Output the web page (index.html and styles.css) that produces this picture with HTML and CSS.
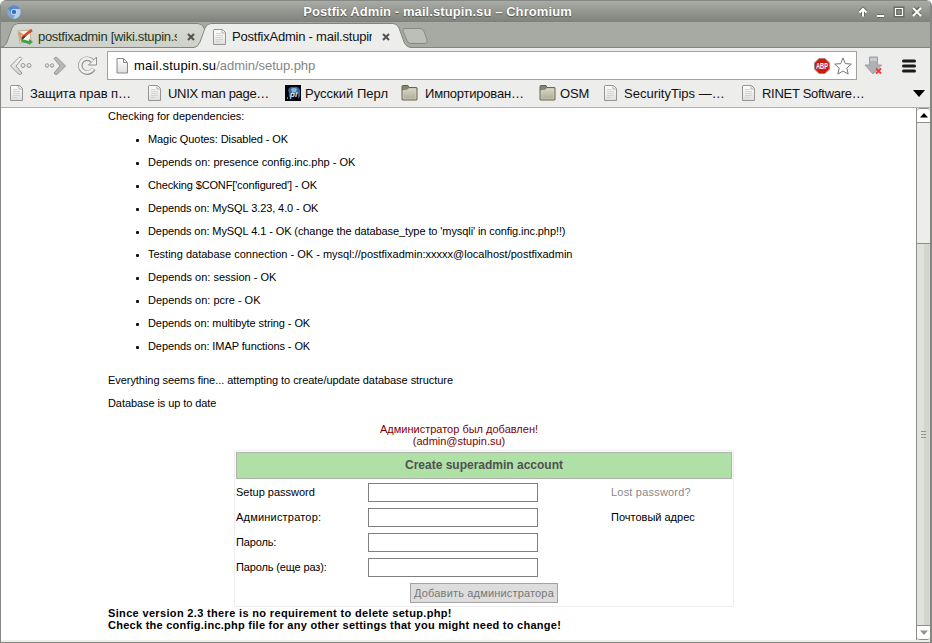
FILE: index.html
```html
<!DOCTYPE html>
<html lang="ru">
<head>
<meta charset="utf-8">
<title>Postfix Admin - mail.stupin.su – Chromium</title>
<link rel="stylesheet" href="styles.css">
</head>
<body>
<svg class="defs" width="0" height="0">
  <defs>
    <linearGradient id="paper" x2="0" y2="1"><stop stop-color="#fff"/><stop offset="1" stop-color="#dedede"/></linearGradient>
    <linearGradient id="fold" x2="0" y2="1"><stop stop-color="#d6d6c4"/><stop offset="1" stop-color="#aeae98"/></linearGradient>
    <linearGradient id="silver" x2="0" y2="1"><stop stop-color="#fff"/><stop offset="1" stop-color="#ccc"/></linearGradient>
    <linearGradient id="tabfill" x2="0" y2="1"><stop stop-color="#d7dad4"/><stop offset="1" stop-color="#cdd1c9"/></linearGradient>
    <symbol id="doc" viewBox="0 0 16 16"><path d="M2 .5h8.500l3 3v12H1.500V1z" fill="url(#paper)" stroke="#959595"/><path d="M10 1v3h3" fill="#fff" stroke="#aaa"/><path d="M4 4.500h5M4 6.500h7M4 8.500h7M4 10.500h7M4 12.500h4" stroke="#d4d4d4"/></symbol>
    <symbol id="folder" viewBox="0 0 16 16"><path d="M.5 14.500V1.500q0-1 1-1h5l1 2h7.500q.5 0 .5.500v11.500q0 .5-1 .5H1.500q-1 0-1-.5z" fill="#85856f" stroke="#65654f"/><path d="M1.500 5.500l4-.3 2-1.700h7v10.500h-13z" fill="url(#fold)" stroke="#d8d8c6" stroke-width=".7"/></symbol>
  </defs>
</svg>
<div class="window">
  <header class="titlebar">
    <svg class="app" width="14" height="14" viewBox="0 0 14 14"><circle cx="7" cy="7" r="6.800" fill="#7fa6d6"/><path d="M1 4A7 7 0 0 1 13 4H7L4 7z" fill="#558acb"/><path d="M13 4A7 7 0 0 1 6 13.800L9.500 8 7 4z" fill="#b2d1f1"/><circle cx="7" cy="7" r="3" fill="#e0edfa"/><circle cx="7" cy="7" r="2.300" fill="#3972b8"/></svg>
    <h1>Postfix Admin - mail.stupin.su – Chromium</h1>
    <svg class="controls" width="66" height="12" viewBox="0 0 66 12"><g fill="none" stroke="#686b65" stroke-width="4"><path d="M5 10V3M2 6l3-3 3 3M19 10h7M37.500 2.500h7v7h-7zM55 2l7 7M62 2l-7 7"/></g><g fill="none" stroke="#fff" stroke-width="2"><path d="M5 10.500V3M1.500 6.500L5 3l3.500 3.500M19 10h7"/><path d="M37.500 2.500h7v7h-7z" stroke-width="1.200"/><path d="M55 2l8 8M63 2l-8 8"/></g></svg>
  </header>

  <nav class="tabs">
    <svg class="tabshapes" width="460" height="26" viewBox="0 0 460 26"><path d="M-1 25.500Q4 25 6 20L11 6Q13 1.500 17 1.500H197Q201 1.500 203 6L210 25.500z" fill="url(#tabfill)" stroke="#81857c"/><path d="M404 6.500h15q3 0 4 3l3 8q1 4-2 4h-14q-3 0-4-3l-4-9q-1-3 2-3" fill="#bbbfb7" stroke="#858980"/><path d="M-1 25.500H193Q197 25 199 20L204 6Q206 1.500 210 1.500H392Q396 1.500 398 6L403 20Q405 25 410 25.500H460V27H-1z" fill="#ededeb" stroke="#81857c"/></svg>
    <div class="tab first">
      <svg width="17" height="16" viewBox="0 0 17 16"><path d="M1 2l12-1 1 12-11 1z" fill="#f6f1e7" stroke="#b8b29c"/><path d="M2 3l3 10M5 11l7 3M3 4l4 3" stroke="#d19b74" stroke-width="2"/><path d="M5 9l7-6 3-2" stroke="#d5492a" stroke-width="2.800"/><path d="M5 10l3-3" stroke="#333" stroke-width="1.500"/><path d="M4 10l8 2v-2l4 3-4 3v-1l-7-2z" fill="#36a845"/></svg>
      <span class="label l1">postfixadmin [wiki.stupin.su]</span>
      <svg class="close" width="8" height="8" viewBox="0 0 8 8"><path d="M1 1l6 6M7 1L1 7" stroke="#50544d" stroke-width="2"/></svg>
    </div>
    <div class="tab second">
      <svg width="16" height="16"><use href="#doc"/></svg>
      <span class="label l2">PostfixAdmin - mail.stupin.su</span>
      <svg class="close" width="8" height="8" viewBox="0 0 8 8"><path d="M1 1l6 6M7 1L1 7" stroke="#50544d" stroke-width="2"/></svg>
    </div>
  </nav>

  <div class="toolbar">
    <svg class="nav" width="91" height="22" viewBox="0 0 91 22"><g fill="url(#silver)" stroke="#969696"><path d="M1.500 11L10 2.500q2-1 3 1L7 11l6 7q-1 2-3 1.500z"/><circle cx="14" cy="10.500" r="2"/><circle cx="20" cy="10.500" r="2"/><circle cx="38" cy="10.500" r="1.700"/><circle cx="43" cy="10.500" r="1.700"/><path d="M56.500 11L48 2.500q-2-1-3 1l6 7.500-6 7q1 2 3 1.500z" fill="#b8b8b8"/></g><path d="M83.500 6A7 7 0 1 0 84.500 14" fill="none" stroke="#929292" stroke-width="4.600"/><path d="M87.500 2v8h-8z" fill="#f2f2f2" stroke="#929292"/><path d="M83.500 6A7 7 0 1 0 84 14" fill="none" stroke="#f0f0f0" stroke-width="2.800"/></svg>
    <div class="url">
      <svg width="13" height="16" viewBox="0 0 13 16"><path d="M1 .5h6.500l4 4v10.500H1z" fill="url(#paper)" stroke="#888"/><path d="M7.500 1v3.500H11" fill="none" stroke="#888"/></svg>
      <span class="address">mail.stupin.su<span>/admin/setup.php</span></span>
      <svg class="abp" width="16" height="16" viewBox="0 0 16 16"><path d="M5 .5h6L15.500 5v6L11 15.500H5L.5 11V5z" fill="#d01b0b" stroke="#aa8078"/><text x="8" y="11" text-anchor="middle" textLength="12" lengthAdjust="spacingAndGlyphs">ABP</text></svg>
      <svg class="star" width="18" height="18" viewBox="0 0 18 18"><path d="M9 .9l2.300 5.700 6 .5-4.500 4 1.400 6L9 14l-5.200 3.100 1.400-6-4.500-4 6-.5z" fill="#fff" stroke="#777"/></svg>
    </div>
    <svg class="download" width="20" height="20" viewBox="0 0 20 20"><path d="M5.500 1h8v8h4l-8.500 9L1 9h4.500z" fill="#aeb2b6" stroke="#9ba0a4"/><path d="M6 2h7v3H6z" fill="#c9cccf"/><path d="M12 12.500l5 5M17 12.500l-5 5" stroke="#ef3539" stroke-width="1.800"/></svg>
    <svg class="menu" width="14" height="14" viewBox="0 0 14 14"><path d="M1.500 2h11M1.500 7h11M1.500 12h11" stroke="#1b1b1b" stroke-width="3" stroke-linecap="round"/></svg>
  </div>

  <div class="bookmarks">
    <div class="bm b1"><svg width="16" height="16"><use href="#doc"/></svg><span>Защита прав п…</span></div>
    <div class="bm b2"><svg width="16" height="16"><use href="#doc"/></svg><span>UNIX man page…</span></div>
    <div class="bm b3"><svg width="16" height="16" viewBox="0 0 16 16"><path d="M0 0h16v16H0z" fill="#02050f"/><path d="M3 5q2-4 6-3 4-1 6 3v6l-2 3V9H6v3H4V8z" fill="#3a6398"/><path d="M6 4q3-2 6 0l-1 3-4 1z" fill="#89b3dc"/><text class="pl" x="5" y="12">pl</text><path d="M2 13h1" stroke="#fff"/></svg><span>Русский Перл</span></div>
    <div class="bm b4"><svg width="17" height="16"><use href="#folder"/></svg><span>Импортирован…</span></div>
    <div class="bm b5"><svg width="17" height="16"><use href="#folder"/></svg><span>OSM</span></div>
    <div class="bm b6"><svg width="16" height="16"><use href="#doc"/></svg><span>SecurityTips —…</span></div>
    <div class="bm b7"><svg width="16" height="16"><use href="#doc"/></svg><span>RINET Software…</span></div>
    <svg class="more" width="12" height="7" viewBox="0 0 12 7"><path d="M0 0h12L6 7z"/></svg>
  </div>

  <div class="viewport">
    <main>
      <p>Checking for dependencies:</p>
      <ul>
        <li class="tight">Magic Quotes: Disabled - OK</li>
        <li>Depends on: presence config.inc.php - OK</li>
        <li class="tighter">Checking $CONF['configured'] - OK</li>
        <li class="tight">Depends on: MySQL 3.23, 4.0 - OK</li>
        <li class="tight">Depends on: MySQL 4.1 - OK (change the database_type to 'mysqli' in config.inc.php!!)</li>
        <li>Testing database connection - OK - mysql://postfixadmin:xxxxx@localhost/postfixadmin</li>
        <li>Depends on: session - OK</li>
        <li>Depends on: pcre - OK</li>
        <li class="tight">Depends on: multibyte string - OK</li>
        <li class="tight">Depends on: IMAP functions - OK</li>
      </ul>
      <p class="fine">Everything seems fine... attempting to create/update database structure</p>
      <p class="upto">Database is up to date</p>
      <p class="message">Администратор был добавлен!<br>(admin@stupin.su)</p>
      <form>
        <h3>Create superadmin account</h3>
        <div class="row"><label>Setup password</label><input type="text"><a>Lost password?</a></div>
        <div class="row"><label class="wide">Администратор:</label><input type="text"><span>Почтовый адрес</span></div>
        <div class="row"><label class="tighter">Пароль:</label><input type="text"></div>
        <div class="row"><label class="tighter">Пароль (еще раз):</label><input type="text"></div>
        <button type="button">Добавить администратора</button>
      </form>
      <p class="notice"><span class="since">Since version 2.3 there is no requirement to delete setup.php!</span><br>Check the config.inc.php file for any other settings that you might need to change!</p>
    </main>
    <aside class="scrollbar">
      <div class="arrow"><svg width="8" height="5" viewBox="0 0 8 5"><path d="M0 4.500L4 0l4 4.500z"/></svg></div>
      <div class="thumb"></div>
      <div class="track"><i></i><i></i><i></i></div>
      <div class="arrow down"><svg width="8" height="5" viewBox="0 0 8 5"><path d="M0 .5L4 5 8 .5z" fill="#92958f"/></svg></div>
    </aside>
  </div>
</div>
</body>
</html>
```

FILE: styles.css
```css
* { box-sizing: border-box; }
body { margin: 0; background: #fff; color: #000; font-family: "Liberation Sans", sans-serif; overflow: hidden; }
p, h1, h3, ul { margin: 0; padding: 0; }
svg { display: block; flex: none; }
.defs { position: absolute; }
.window { width: 932px; height: 643px; display: flex; flex-direction: column; border: 1px solid #858882; border-width: 0 2px 1px 1px; border-radius: 6px 6px 0 0; overflow: hidden; background: #ededeb; }
.titlebar { height: 22px; flex: none; display: flex; align-items: center; padding: 2px 6px 0 6px; background: linear-gradient(#858882 0, #858882 1px, #a9aca6 1px, #7e827b 100%); }
h1 { flex: 1; text-align: center; font-size: 13px; line-height: 18px; letter-spacing: .08px; color: #fff; text-shadow: 0 0 1px #555, 0 1px 1px #555; padding-right: 4px; }
.tabs { height: 26px; flex: none; background: #a7aaa3; position: relative; display: flex; }
.tabshapes { position: absolute; left: 0; top: 0; }
.tabs::after { content: ""; position: absolute; left: 430px; right: 0; bottom: 0; height: 1px; background: #81857c; }
.tab { position: relative; display: flex; align-items: center; height: 26px; padding-top: 3px; font-size: 13px; color: #111; }
.first { width: 194px; padding-left: 16px; color: #24351d; }
.second { width: 204px; padding-left: 17px; }
.label { overflow: hidden; white-space: nowrap; width: 140px; line-height: 18px; }
.l1 { margin-left: 4px; letter-spacing: -.3px; }
.l2 { margin-left: 4px; letter-spacing: -.22px; }
.close { margin-left: 10px; }
.toolbar { height: 33px; flex: none; display: flex; align-items: center; padding: 2px 13px 0 8px; }
.nav { margin-right: 7px; }
.url { width: 750px; height: 29px; border: 1px solid #a1a49c; background: #fff; display: flex; align-items: center; padding-left: 8px; }
.address { margin-left: 5px; font-size: 13px; letter-spacing: .2px; flex: 1; }
.address span { color: #858585; letter-spacing: -.05px; }
.abp { margin-right: 4px; }
.abp text { font: bold 9px "Liberation Sans", sans-serif; fill: #fff; }
.star { margin-right: 4px; }
.download { margin-left: 7px; }
.menu { margin-left: 18px; }
.bookmarks { height: 27px; flex: none; display: flex; align-items: center; padding: 0 0 2px 8px; border-bottom: 1px solid #b0b1ac; font-size: 13px; color: #111; }
.bm { display: flex; align-items: center; white-space: nowrap; flex: none; }
.bm span { margin-left: 5px; }
.b1 { width: 138px; letter-spacing: -.05px; }
.b2 { width: 138px; letter-spacing: -.32px; }
.b3 { width: 116px; letter-spacing: .02px; }
.b3 span { margin-left: 4px; }
.b4 { width: 138px; letter-spacing: -.2px; }
.b4 span { margin-left: 7px; }
.b5 { width: 64px; letter-spacing: -.1px; }
.b5 span { margin-left: 4px; }
.b6 { width: 138px; }
.b7 { width: 172px; letter-spacing: -.28px; }
.pl { font: italic bold 8px "Liberation Sans", sans-serif; fill: #d7edff; }
.viewport { height: 532px; flex: none; display: flex; background: #fff; }
main { width: 915px; padding: 2px 0 0 107px; font-size: 11px; line-height: 12px; white-space: nowrap; }
ul { list-style: none; padding: 11px 0 0 40px; }
li { height: 12px; margin-bottom: 11px; position: relative; }
li::before { content: ""; position: absolute; left: -12px; top: 6px; width: 3px; height: 3px; border-radius: 1px; background: #111; }
.tight { letter-spacing: -.09px; }
.tighter { letter-spacing: -.14px; }
.fine { margin-top: 22px; letter-spacing: -.05px; }
.upto { margin-top: 11px; letter-spacing: -.08px; }
.message { width: 702px; margin-top: 14px; text-align: center; color: #7f0000; }
form { width: 500px; height: 157px; margin: 3px 0 0 126px; border: 1px solid #eee; padding: 1px; display: flex; flex-direction: column; }
h3 { width: 496px; height: 27px; border: 1px solid #b0b3ad; background: #afe1a7; color: #505050; font-size: 12px; line-height: 24px; text-align: center; margin-bottom: 1px; }
.row { height: 25px; display: flex; align-items: center; }
.row label, .row a, .row span { padding-bottom: 2px; }
label { width: 132px; }
.wide { letter-spacing: .2px; }
input { width: 170px; height: 19px; padding: 0; margin: 0 73px 0 0; border: 1px solid #808080; background: #fff; }
a { color: #888; letter-spacing: .2px; }
button { align-self: flex-start; width: 148px; height: 20px; margin: 3px 0 0 174px; padding: 0; border: 1px solid #a3a3a3; background: #ddd; color: #777; font: 11px/16px "Liberation Sans", sans-serif; letter-spacing: .17px; }
.notice { font-weight: bold; letter-spacing: .26px; }
.since { letter-spacing: .34px; }
.scrollbar { width: 14px; border-left: 1px solid #8c8f89; display: flex; flex-direction: column; }
.arrow { height: 15px; display: flex; align-items: center; justify-content: center; border: 1px solid #8c8f89; border-width: 1px 0; border-radius: 3px 3px 0 0; background: #fff; }
.down { border-radius: 0 0 3px 3px; }
.thumb { height: 120px; background: #ededeb; }
.track { flex: 1; border-top: 1px solid #8c8f89; background: linear-gradient(90deg, #dfe1dc 0 7px, #d3d6cf 7px); padding: 187px 4px 0; }
.track i { display: block; height: 1px; background: #92958e; margin-bottom: 2px; }
```
